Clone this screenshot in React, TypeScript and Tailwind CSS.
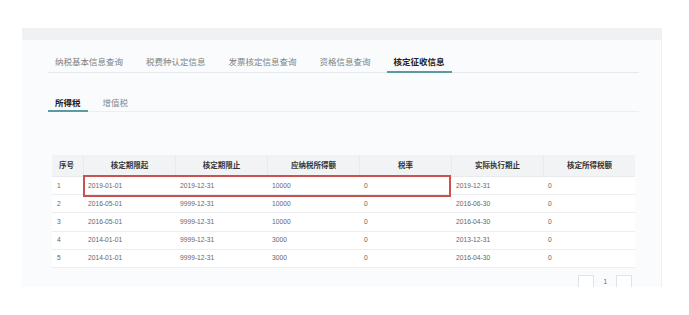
import React from "react";

const tabs = ["纳税基本信息查询", "税费种认定信息", "发票核定信息查询", "资格信息查询", "核定征收信息"];
const headers = ["序号", "核定期限起", "核定期限止", "应纳税所得额", "税率", "实际执行期止", "核定所得税额"];
const rows = [
  ["1", "2019-01-01", "2019-12-31", "10000", "0", "2019-12-31", "0"],
  ["2", "2016-05-01", "9999-12-31", "10000", "0", "2016-06-30", "0"],
  ["3", "2016-05-01", "9999-12-31", "10000", "0", "2016-04-30", "0"],
  ["4", "2014-01-01", "9999-12-31", "3000", "0", "2013-12-31", "0"],
  ["5", "2014-01-01", "9999-12-31", "3000", "0", "2016-04-30", "0"],
];

export default function App() {
  return (
    <div
      className="w-[689px] h-[315px] bg-white pt-[28px] pl-[22px]"
      style={{ fontFamily: '"Liberation Sans", "Noto Sans CJK SC", sans-serif' }}
    >
      <div className="w-[640px] h-[259px] overflow-hidden bg-[#fafbfc] border-r border-[#eef0f2] flex flex-col">
        <div className="h-[12px] bg-[#f0f1f3] shrink-0" />
        <div className="ml-[26px] mr-[22px] mt-[14px] flex gap-[9px] border-b border-[#e6e9ec]">
          {tabs.map((t, i) => (
            <div
              key={t}
              className={
                "px-[7px] pt-[2px] pb-[3px] text-[8.5px] leading-[12px] border-b-2 -mb-px " +
                (i === 4
                  ? "border-[#5b9aa0] text-[#222] font-bold"
                  : "border-transparent text-[#808080]")
              }
            >
              {t}
            </div>
          ))}
        </div>
        <div className="ml-[26px] mr-[22px] mt-[22px] flex gap-[8px] border-b border-[#eceef0]">
          <div className="px-[7px] pt-[2px] pb-[1px] text-[8.5px] leading-[12px] border-b-2 -mb-px border-[#5b9aa0] text-[#222] font-bold">
            所得税
          </div>
          <div className="px-[7px] pt-[2px] pb-[1px] text-[8.5px] leading-[12px] border-b-2 -mb-px border-transparent text-[#8a8a8a]">
            增值税
          </div>
        </div>
        <div className="ml-[30px] mt-[43px] w-[583px] relative bg-white">
          <div className="grid grid-cols-[31px_repeat(6,92px)] h-[22px] bg-[#f2f3f5] border-b border-[#e8eaed]">
            {headers.map((h, i) => (
              <div
                key={h}
                className={
                  "flex items-center text-[7.5px] font-bold text-[#333] " +
                  (i === 0 ? "pl-[7px]" : "justify-center border-l border-[#e8eaed]")
                }
              >
                {h}
              </div>
            ))}
          </div>
          {rows.map((r, ri) => (
            <div
              key={ri}
              className="grid grid-cols-[31px_repeat(6,92px)] h-[18.2px] border-b border-[#eceef1]"
            >
              {r.map((c, ci) => (
                <div key={ci} className="flex items-center pl-[5px] text-[6.7px] text-[#666]">
                  {c}
                </div>
              ))}
            </div>
          ))}
          <div className="absolute left-[31px] top-[20px] w-[368px] h-[22px] border-2 border-[#c9524f]" />
        </div>
        <div className="w-[610px] mt-[7px] flex justify-end items-center gap-[9px]">
          <div className="w-[16px] h-[15px] border border-[#e0e3e7] bg-white" />
          <div className="text-[6.5px] leading-none text-[#666]">1</div>
          <div className="w-[16px] h-[15px] border border-[#e0e3e7] bg-white" />
        </div>
      </div>
    </div>
  );
}
